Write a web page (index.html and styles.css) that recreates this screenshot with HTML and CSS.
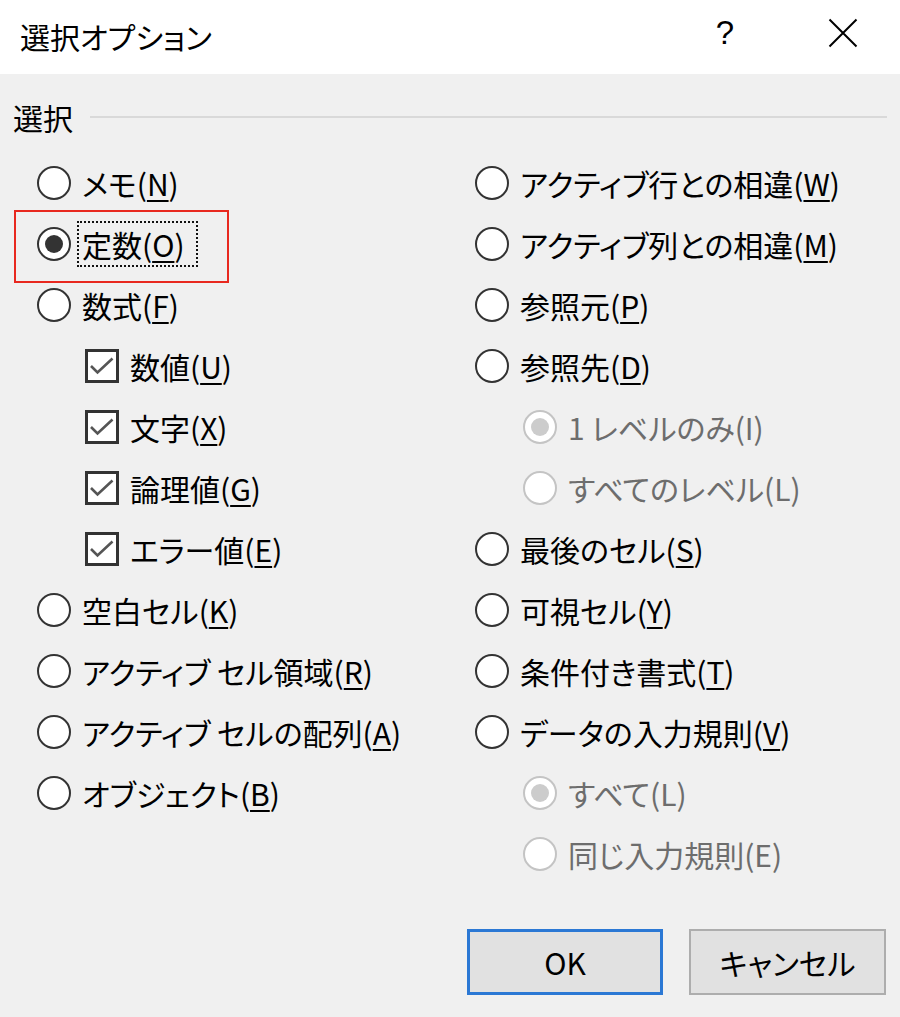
FILE: index.html
```html
<!DOCTYPE html>
<html lang="ja">
<head>
<meta charset="utf-8">
<title>選択オプション</title>
<link rel="stylesheet" href="styles.css">
</head>
<body>
<div class="dialog">
  <header class="titlebar">
    <div class="title">選択オプション</div>
    <div class="tb-help">?</div>
    <div class="tb-close">
      <svg width="30" height="30" viewBox="0 0 30 30"><path d="M1.5 1.5 L28.5 28.5 M28.5 1.5 L1.5 28.5" stroke="#000" stroke-width="2" fill="none"/></svg>
    </div>
  </header>
  <main class="content">
    <div class="group-head"><span class="group-label">選択</span><span class="group-line"></span></div>
    <div class="options">
      <div class="col">
        <div class="opt"><span class="radio"></span><span class="lbl">メモ(<u>N</u>)</span></div>
        <div class="opt"><span class="radio on"></span><span class="lbl focus">定数(<u>O</u>)</span></div>
        <div class="opt"><span class="radio"></span><span class="lbl">数式(<u>F</u>)</span></div>
        <div class="opt sub"><svg class="check" width="34" height="34" viewBox="0 0 34 34"><rect x="1.5" y="1.5" width="31" height="31" fill="#fff" stroke="#333" stroke-width="3"/><polyline points="6,17 12.5,23.5 27.5,9.5" fill="none" stroke="#555" stroke-width="2.6"/></svg><span class="lbl">数値(<u>U</u>)</span></div>
        <div class="opt sub"><svg class="check" width="34" height="34" viewBox="0 0 34 34"><rect x="1.5" y="1.5" width="31" height="31" fill="#fff" stroke="#333" stroke-width="3"/><polyline points="6,17 12.5,23.5 27.5,9.5" fill="none" stroke="#555" stroke-width="2.6"/></svg><span class="lbl">文字(<u>X</u>)</span></div>
        <div class="opt sub"><svg class="check" width="34" height="34" viewBox="0 0 34 34"><rect x="1.5" y="1.5" width="31" height="31" fill="#fff" stroke="#333" stroke-width="3"/><polyline points="6,17 12.5,23.5 27.5,9.5" fill="none" stroke="#555" stroke-width="2.6"/></svg><span class="lbl">論理値(<u>G</u>)</span></div>
        <div class="opt sub"><svg class="check" width="34" height="34" viewBox="0 0 34 34"><rect x="1.5" y="1.5" width="31" height="31" fill="#fff" stroke="#333" stroke-width="3"/><polyline points="6,17 12.5,23.5 27.5,9.5" fill="none" stroke="#555" stroke-width="2.6"/></svg><span class="lbl">エラー値(<u>E</u>)</span></div>
        <div class="opt"><span class="radio"></span><span class="lbl">空白セル(<u>K</u>)</span></div>
        <div class="opt"><span class="radio"></span><span class="lbl">アクティブ セル領域(<u>R</u>)</span></div>
        <div class="opt"><span class="radio"></span><span class="lbl">アクティブ セルの配列(<u>A</u>)</span></div>
        <div class="opt"><span class="radio"></span><span class="lbl">オブジェクト(<u>B</u>)</span></div>
      </div>
      <div class="col">
        <div class="opt"><span class="radio"></span><span class="lbl">アクティブ行との相違(<u>W</u>)</span></div>
        <div class="opt"><span class="radio"></span><span class="lbl">アクティブ列との相違(<u>M</u>)</span></div>
        <div class="opt"><span class="radio"></span><span class="lbl">参照元(<u>P</u>)</span></div>
        <div class="opt"><span class="radio"></span><span class="lbl">参照先(<u>D</u>)</span></div>
        <div class="opt sub disabled"><span class="radio on"></span><span class="lbl">1 レベルのみ(I)</span></div>
        <div class="opt sub disabled"><span class="radio"></span><span class="lbl">すべてのレベル(L)</span></div>
        <div class="opt"><span class="radio"></span><span class="lbl">最後のセル(<u>S</u>)</span></div>
        <div class="opt"><span class="radio"></span><span class="lbl">可視セル(<u>Y</u>)</span></div>
        <div class="opt"><span class="radio"></span><span class="lbl">条件付き書式(<u>T</u>)</span></div>
        <div class="opt"><span class="radio"></span><span class="lbl">データの入力規則(<u>V</u>)</span></div>
        <div class="opt sub disabled"><span class="radio on"></span><span class="lbl">すべて(L)</span></div>
        <div class="opt sub disabled"><span class="radio"></span><span class="lbl">同じ入力規則(E)</span></div>
      </div>
    </div>
    <div class="buttons">
      <div class="btn default ok">OK</div>
      <div class="btn cancel">キャンセル</div>
    </div>
  </main>
  <div class="annot"></div>
</div>
</body>
</html>
```

FILE: styles.css
```css
html, body {
  margin: 0;
  padding: 0;
}
body {
  background: #f0f0f0;
  font-family: "Noto Sans CJK JP", "Noto Sans", sans-serif;
  font-feature-settings: "palt";
  color: #000;
}
.dialog {
  position: relative;
  width: 900px;
  height: 1017px;
  overflow: hidden;
}
.titlebar {
  height: 74px;
  background: #fff;
  display: flex;
  align-items: center;
}
.title {
  flex: 1;
  padding-left: 20px;
  font-size: 30px;
  line-height: 1;
  padding-bottom: 3px;
}
.tb-help,
.tb-close {
  height: 74px;
  box-sizing: border-box;
  padding-bottom: 9px;
  display: flex;
  align-items: center;
  justify-content: center;
}
.tb-help {
  width: 46px;
  font-family: "Liberation Sans", sans-serif;
  font-size: 33px;
}
.tb-close {
  width: 66px;
  margin-left: 62px;
  margin-right: 24px;
}
.content {
  padding-top: 23px;
}
.group-head {
  height: 40px;
  display: flex;
  align-items: center;
  padding-left: 13px;
  padding-right: 13px;
  margin-bottom: 15px;
}
.group-label {
  font-size: 30px;
  line-height: 40px;
  margin-right: 17px;
}
.group-line {
  flex: 1;
  height: 2px;
  background: #d9d9d9;
}
.options {
  display: grid;
  grid-template-columns: 438px 1fr;
  padding-left: 37px;
}
.opt {
  height: 61px;
  display: flex;
  align-items: center;
}
.opt.sub {
  padding-left: 48px;
}
.radio {
  flex: none;
  width: 34px;
  height: 34px;
  box-sizing: border-box;
  border: 2.5px solid #333;
  border-radius: 50%;
  background: #fff;
  margin-right: 11px;
  display: flex;
  align-items: center;
  justify-content: center;
}
.radio.on::after {
  content: "";
  width: 18px;
  height: 18px;
  border-radius: 50%;
  background: #333;
}
.disabled .radio {
  border-color: #c4c4c4;
}
.disabled .radio.on::after {
  background: #cccccc;
}
.check {
  flex: none;
  margin-right: 11px;
  display: block;
}
.lbl {
  font-size: 30px;
  line-height: 40px;
  white-space: nowrap;
}
.lbl.focus {
  display: inline-block;
  line-height: 36px;
  padding-right: 8px;
  outline: 2px dotted #111;
  outline-offset: 3px;
}
.disabled .lbl {
  color: #6d6d6d;
}
u {
  text-decoration-thickness: 2px;
  text-underline-offset: 4px;
}
.buttons {
  display: flex;
  justify-content: flex-end;
  gap: 26px;
  padding-right: 14px;
  margin-top: 45px;
}
.btn {
  height: 66px;
  box-sizing: border-box;
  background: #e1e1e1;
  border: 2.5px solid #adadad;
  font-size: 30px;
  display: flex;
  align-items: center;
  justify-content: center;
}
.btn.ok {
  width: 196px;
  border: 3px solid #2b78d4;
}
.btn.cancel {
  width: 197px;
}
.annot {
  position: absolute;
  left: 14px;
  top: 210px;
  width: 215px;
  height: 73px;
  box-sizing: border-box;
  border: 2.5px solid #e8281f;
}
```
